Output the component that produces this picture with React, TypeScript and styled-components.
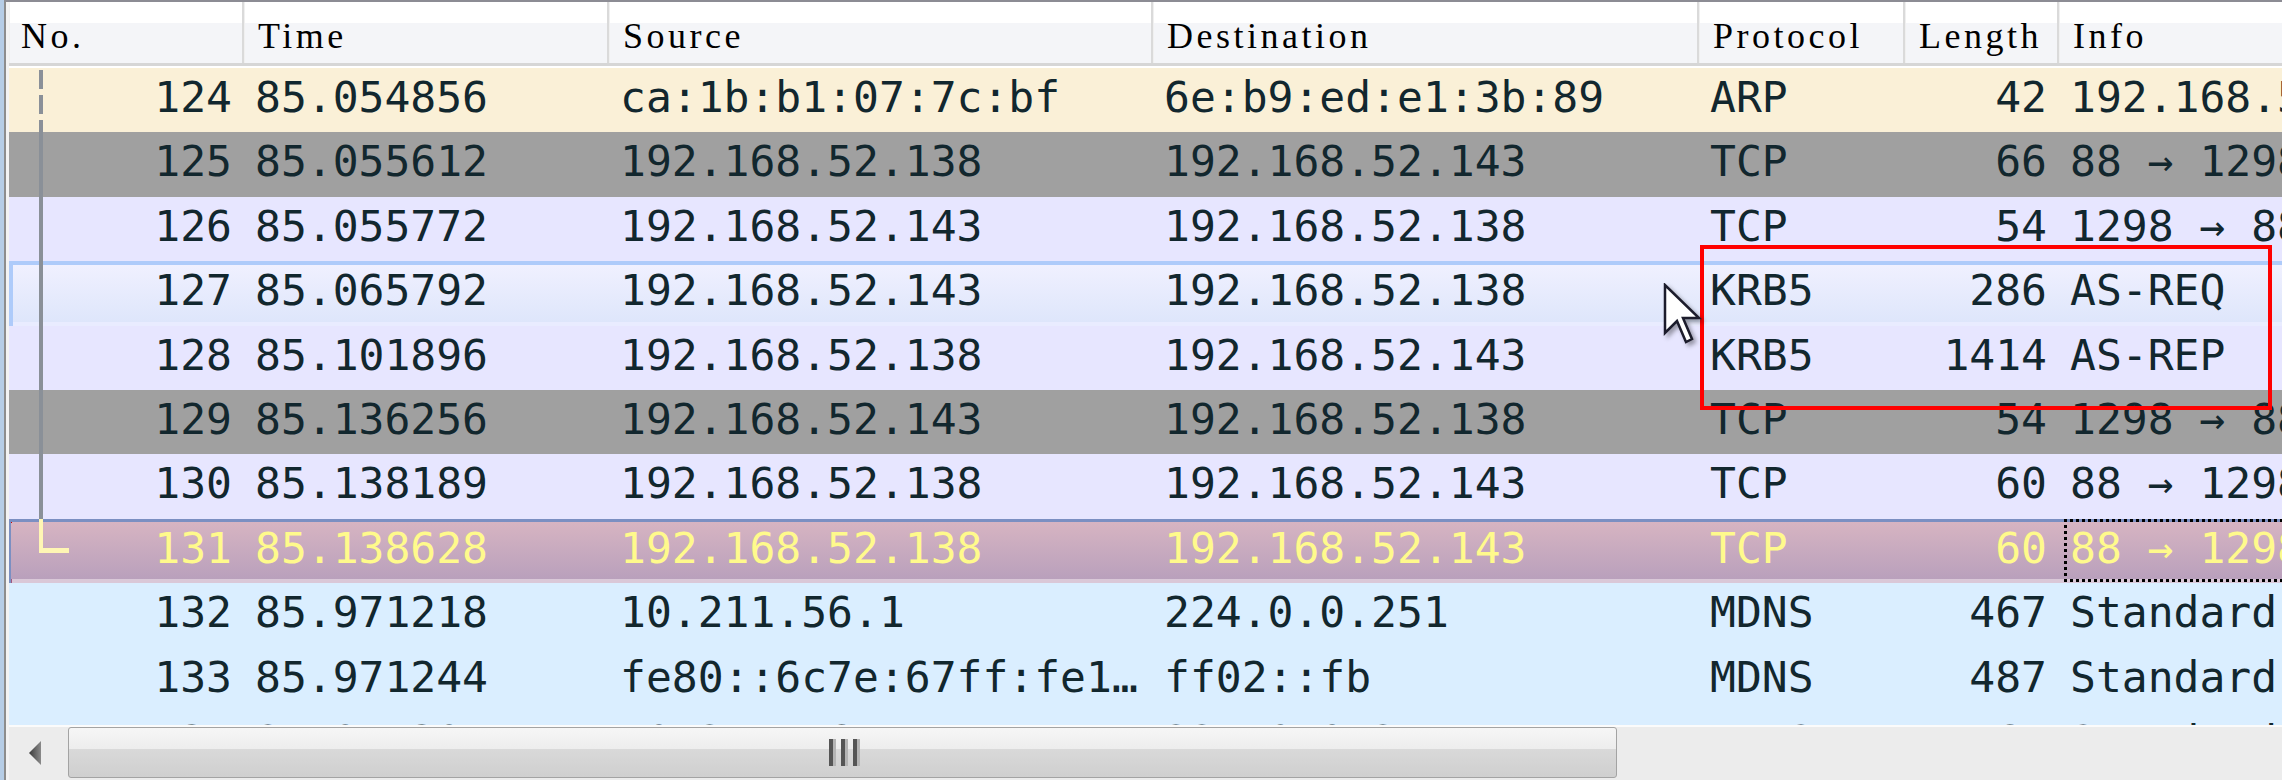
import React from "react";
import styled, { createGlobalStyle, css } from "styled-components";

const GlobalStyle = createGlobalStyle`
  html, body { margin: 0; padding: 0; background: #ffffff; }
  body { width: 2282px; height: 780px; overflow: hidden; }
  #root { width: 2282px; height: 780px; }
`;

type Kind = "arp" | "syn" | "tcp" | "udp";
type Tree = "dashed" | "line" | "end" | "none";
type State = "normal" | "hover" | "selected";

interface Packet {
  no: number;
  time: string;
  src: string;
  dst: string;
  proto: string;
  len: number;
  info: string;
  kind: Kind;
  tree: Tree;
  state?: State;
}

const packets: Packet[] = [
  { no: 124, time: "85.054856", src: "ca:1b:b1:07:7c:bf", dst: "6e:b9:ed:e1:3b:89", proto: "ARP", len: 42, info: "192.168.52.138 is at ca:1b:b1:07:7c:bf", kind: "arp", tree: "dashed" },
  { no: 125, time: "85.055612", src: "192.168.52.138", dst: "192.168.52.143", proto: "TCP", len: 66, info: "88 → 1298 [SYN, ACK] Seq=0 Ack=1 Win=64240 Len=0", kind: "syn", tree: "line" },
  { no: 126, time: "85.055772", src: "192.168.52.143", dst: "192.168.52.138", proto: "TCP", len: 54, info: "1298 → 88 [ACK] Seq=1 Ack=1 Win=262656 Len=0", kind: "tcp", tree: "line" },
  { no: 127, time: "85.065792", src: "192.168.52.143", dst: "192.168.52.138", proto: "KRB5", len: 286, info: "AS-REQ", kind: "tcp", tree: "line", state: "hover" },
  { no: 128, time: "85.101896", src: "192.168.52.138", dst: "192.168.52.143", proto: "KRB5", len: 1414, info: "AS-REP", kind: "tcp", tree: "line" },
  { no: 129, time: "85.136256", src: "192.168.52.143", dst: "192.168.52.138", proto: "TCP", len: 54, info: "1298 → 88 [FIN, ACK] Seq=233 Ack=1361", kind: "syn", tree: "line" },
  { no: 130, time: "85.138189", src: "192.168.52.138", dst: "192.168.52.143", proto: "TCP", len: 60, info: "88 → 1298 [ACK] Seq=1361 Ack=234", kind: "tcp", tree: "line" },
  { no: 131, time: "85.138628", src: "192.168.52.138", dst: "192.168.52.143", proto: "TCP", len: 60, info: "88 → 1298 [RST, ACK] Seq=1361 Ack=234", kind: "tcp", tree: "end", state: "selected" },
  { no: 132, time: "85.971218", src: "10.211.56.1", dst: "224.0.0.251", proto: "MDNS", len: 467, info: "Standard query response 0x0000 PTR", kind: "udp", tree: "none" },
  { no: 133, time: "85.971244", src: "fe80::6c7e:67ff:fe1…", dst: "ff02::fb", proto: "MDNS", len: 487, info: "Standard query response 0x0000 PTR", kind: "udp", tree: "none" },
  { no: 134, time: "85.971301", src: "10.211.56.1", dst: "224.0.0.251", proto: "MDNS", len: 467, info: "Standard query response 0x0000 PTR", kind: "udp", tree: "none" },
];

interface Column {
  key: "no" | "time" | "src" | "dst" | "proto" | "len" | "info";
  title: string;
  width: number;
  align: "left" | "right";
}

const columns: Column[] = [
  { key: "no", title: "No.", width: 233, align: "right" },
  { key: "time", title: "Time", width: 365, align: "left" },
  { key: "src", title: "Source", width: 544, align: "left" },
  { key: "dst", title: "Destination", width: 546, align: "left" },
  { key: "proto", title: "Protocol", width: 206, align: "left" },
  { key: "len", title: "Length", width: 154, align: "right" },
  { key: "info", title: "Info", width: 900, align: "left" },
];

const kindBg: Record<Kind, string> = {
  arp: "#faf0d7",
  syn: "#a0a0a0",
  tcp: "#e7e6ff",
  udp: "#daeeff",
};

const Frame = styled.div`
  width: 2282px;
  height: 780px;
  box-sizing: border-box;
  border-left: 4px solid #b6cde6;
  display: flex;
`;

const Panel = styled.div`
  flex: 1;
  display: flex;
  flex-direction: column;
  border-left: 2px solid #8d8d8d;
  border-top: 2px solid #8c8c94;
  padding-left: 3px;
  background: #f3f3f3;
  min-width: 0;
`;

const ListArea = styled.div`
  position: relative;
  height: 723px;
  overflow: hidden;
  background: #ffffff;
  flex: none;
`;

const Header = styled.div`
  display: flex;
  height: 64px;
  box-sizing: border-box;
  border-bottom: 3px solid #d6d6d6;
  margin-bottom: 2px;
  background: linear-gradient(to bottom, #ffffff 0, #ffffff 21px, #f4f5f8 21px, #f4f5f8 100%);
`;

const HeaderCell = styled.div<{ $w: number; $first?: boolean }>`
  flex: none;
  width: ${(p) => p.$w}px;
  height: 61px;
  box-sizing: border-box;
  padding-top: 14px;
  padding-left: ${(p) => (p.$first ? 12 : 14)}px;
  border-left: ${(p) => (p.$first ? "none" : "2px solid #dadada")};
  box-shadow: inset 1px 0 0 #f0f0f0;
  font-family: "Liberation Serif", "Times New Roman", serif;
  font-size: 36px;
  line-height: 40px;
  letter-spacing: 3.5px;
  color: #000000;
  white-space: nowrap;
  overflow: hidden;
`;

const Rows = styled.div`
  display: flex;
  flex-direction: column;
`;

const stateStyles: Record<State, ReturnType<typeof css>> = {
  normal: css``,
  hover: css`
    background: linear-gradient(to bottom, #f1f1ff 0, #dee6fb calc(100% - 4px), #e9ecff calc(100% - 4px), #e9ecff 100%);
    box-shadow: inset 0 4px 0 #aecbfa, inset 4px 0 0 #aecbfa;
  `,
  selected: css`
    background:
      linear-gradient(#c40000, #c40000) no-repeat 0 0 / 3px 4px,
      linear-gradient(#a05a80, #a05a80) no-repeat 0 100% / 3px 4px,
      linear-gradient(to bottom, #d8b5c2 0, #b9a0bc calc(100% - 4px), #dac8d8 calc(100% - 4px), #dac8d8 100%);
    box-shadow: inset 0 3px 0 #7b8fc2, inset 2px 0 0 #7b8fc2;
    color: #fffa8c;
  `,
};

const Row = styled.div<{ $kind: Kind; $state: State }>`
  display: flex;
  flex: none;
  height: 64.4px;
  background: ${(p) => kindBg[p.$kind]};
  color: #12272e;
  ${(p) => stateStyles[p.$state]}
`;

const treeLine = "#8a9098";
const treeEnd = "#fff6b4";

const treeStyles: Record<Tree, ReturnType<typeof css>> = {
  none: css``,
  line: css`
    background: linear-gradient(${treeLine}, ${treeLine}) no-repeat 30px 0 / 4px 100%;
  `,
  dashed: css`
    background: repeating-linear-gradient(to bottom, ${treeLine} 0 19px, transparent 19px 25px) no-repeat 30px 2px / 4px 100%;
  `,
  end: css`
    background:
      linear-gradient(${treeEnd}, ${treeEnd}) no-repeat 30px 0 / 4px 34px,
      linear-gradient(${treeEnd}, ${treeEnd}) no-repeat 30px 29px / 30px 5px;
  `,
};

const Cell = styled.div<{ $w: number; $align: "left" | "right"; $tree?: Tree; $focus?: boolean }>`
  position: relative;
  flex: none;
  width: ${(p) => p.$w}px;
  box-sizing: border-box;
  padding: 0 ${(p) => (p.$align === "right" ? 10 : 0)}px 0 ${(p) => (p.$align === "left" ? 13 : 0)}px;
  text-align: ${(p) => p.$align};
  font-family: "DejaVu Sans Mono", "Liberation Mono", monospace;
  font-size: 43px;
  line-height: 58px;
  white-space: nowrap;
  overflow: hidden;
  ${(p) => (p.$tree ? treeStyles[p.$tree] : "")}
  ${(p) =>
    p.$focus &&
    css`
      &::after {
        content: "";
        position: absolute;
        left: 7px;
        top: 0;
        right: -10px;
        bottom: 1px;
        background:
          repeating-linear-gradient(90deg, #000 0 3px, transparent 3px 6px) no-repeat 0 0 / 100% 3px,
          repeating-linear-gradient(90deg, #000 0 3px, transparent 3px 6px) no-repeat 0 100% / 100% 3px,
          repeating-linear-gradient(180deg, #000 0 3px, transparent 3px 6px) no-repeat 0 0 / 3px 100%;
      }
    `}
`;

const RedBox = styled.div`
  position: absolute;
  left: 1691px;
  top: 243px;
  width: 572px;
  height: 165px;
  box-sizing: border-box;
  border: 4px solid #ff0000;
  pointer-events: none;
`;

const Cursor = styled.svg`
  position: absolute;
  left: 1654px;
  top: 281px;
  width: 44px;
  height: 66px;
  filter: drop-shadow(3px 3px 2px rgba(0, 0, 0, 0.35));
  pointer-events: none;
`;

const ScrollBar = styled.div`
  flex: 1;
  display: flex;
  background: #ececec;
  border-top: 2px solid #fbfbfb;
  box-sizing: border-box;
  padding-bottom: 2px;
`;

const ArrowButton = styled.div`
  flex: none;
  width: 59px;
  display: flex;
  align-items: center;
  padding-left: 20px;
  box-sizing: border-box;
`;

const Thumb = styled.div`
  flex: none;
  width: 1549px;
  box-sizing: border-box;
  border: 1px solid #a3a3a3;
  border-radius: 3px;
  background: linear-gradient(to bottom, #f6f6f6 0%, #ededed 42%, #d9d9d9 43%, #cfcfcf 100%);
  display: flex;
  align-items: center;
  justify-content: center;
  gap: 5px;
  padding-left: 4px;
`;

const GripBar = styled.span`
  display: block;
  width: 4px;
  height: 27px;
  background: #555555;
  border-right: 3px solid #b4b4b4;
`;

const Track = styled.div`
  flex: 1;
`;

export default function App() {
  return (
    <>
      <GlobalStyle />
      <Frame>
        <Panel>
          <ListArea>
            <Header>
              {columns.map((c, i) => (
                <HeaderCell key={c.key} $w={c.width} $first={i === 0}>
                  {c.title}
                </HeaderCell>
              ))}
            </Header>
            <Rows>
              {packets.map((p) => {
                const state: State = p.state ?? "normal";
                return (
                  <Row key={p.no} $kind={p.kind} $state={state}>
                    {columns.map((c) => (
                      <Cell
                        key={c.key}
                        $w={c.width}
                        $align={c.align}
                        $tree={c.key === "no" ? p.tree : undefined}
                        $focus={c.key === "info" && state === "selected"}
                      >
                        {String(p[c.key])}
                      </Cell>
                    ))}
                  </Row>
                );
              })}
            </Rows>
            <RedBox />
            <Cursor viewBox="0 0 44 66">
              <path
                d="M2 2 L2 50 L14 38 L23 59 L29 56 L20 35 L36 35 Z"
                fill="#ffffff"
                stroke="#1c1c2c"
                strokeWidth="2.5"
                strokeLinejoin="miter"
              />
            </Cursor>
          </ListArea>
          <ScrollBar>
            <ArrowButton>
              <svg width="13" height="24" viewBox="0 0 13 24">
                <defs>
                  <linearGradient id="arrowGrad" x1="0" y1="0" x2="1" y2="0">
                    <stop offset="0" stopColor="#3a3a3a" />
                    <stop offset="1" stopColor="#8a8a8a" />
                  </linearGradient>
                </defs>
                <polygon points="0,12 12,0 12,24" fill="url(#arrowGrad)" />
              </svg>
            </ArrowButton>
            <Thumb>
              <GripBar />
              <GripBar />
              <GripBar />
            </Thumb>
            <Track />
          </ScrollBar>
        </Panel>
      </Frame>
    </>
  );
}
